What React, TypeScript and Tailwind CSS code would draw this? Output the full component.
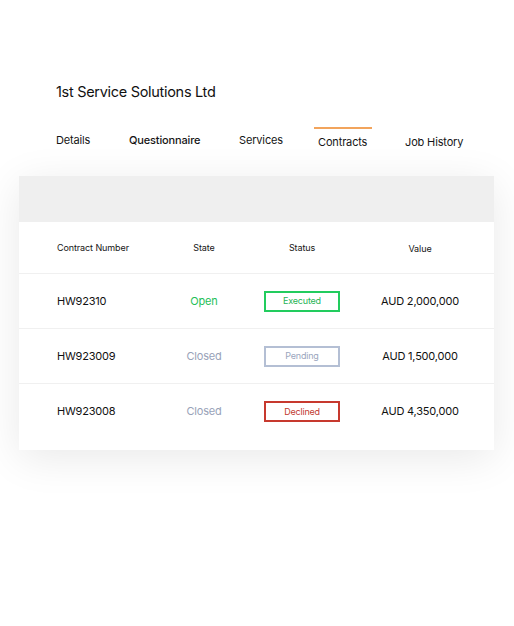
import React from "react";

const font = { fontFamily: "Inter, 'Noto Sans', sans-serif" };

type Row = {
  number: string;
  state: "Open" | "Closed";
  status: "Executed" | "Pending" | "Declined";
  value: string;
};

const rows: Row[] = [
  { number: "HW92310", state: "Open", status: "Executed", value: "AUD 2,000,000" },
  { number: "HW923009", state: "Closed", status: "Pending", value: "AUD 1,500,000" },
  { number: "HW923008", state: "Closed", status: "Declined", value: "AUD 4,350,000" },
];

const cols = "grid grid-cols-[113px_68px_128px_108px] pl-[38px]";

function StatusBadge({ status }: { status: Row["status"] }) {
  const styles = {
    Executed: "border-[#22cc5e] text-[#1fb455]",
    Pending: "border-[#b4bfd4] text-[#9aa5bd]",
    Declined: "border-[#c7392e] text-[#c23a30]",
  }[status];
  return (
    <div
      className={`w-[76px] h-[21px] border-2 flex items-center justify-center text-[9px] ${styles}`}
    >
      {status}
    </div>
  );
}

export default function App() {
  return (
    <div className="w-[514px] h-[626px] bg-white" style={font}>
      <div className="pt-[82px] pl-[56px]">
        <h1 className="text-[14.5px] leading-[20px] text-[#111] tracking-[-0.3px]">
          1st Service Solutions Ltd
        </h1>
      </div>

      <nav className="mt-[25px] pl-[56px] flex items-start text-[11px] tracking-[-0.15px] text-[#151515] h-[49px]">
        <div className="w-[73px] mt-[5px]">Details</div>
        <div className="w-[110px] mt-[5px] font-medium">Questionnaire</div>
        <div className="w-[75px] mt-[5px]">Services</div>
        <div className="w-[91px] flex flex-col">
          <div className="h-[2px] w-[58px] bg-[#f2a45c]" />
          <div className="mt-[5px] ml-[4px]">Contracts</div>
        </div>
        <div className="mt-[7px]">Job History</div>
      </nav>

      <div className="ml-[19px] w-[475px] bg-white shadow-[0_8px_40px_rgba(0,0,0,0.09)]">
        <div className="h-[46px] bg-[#efefef]" />

        <div
          className={`${cols} h-[52px] items-center text-[9px] tracking-[-0.1px] text-[#151515] border-b border-[#f0f0f0]`}
        >
          <div>Contract Number</div>
          <div className="text-center">State</div>
          <div className="text-center">Status</div>
          <div className="text-center pt-[3px]">Value</div>
        </div>

        {rows.map((r, i) => (
          <div
            key={r.number}
            className={`${cols} h-[55px] items-center text-[11px] tracking-[-0.2px] text-[#111] ${
              i < rows.length - 1 ? "border-b border-[#f0f0f0]" : ""
            }`}
          >
            <div>{r.number}</div>
            <div
              className={`text-center ${
                r.state === "Open" ? "text-[#1fc058]" : "text-[#98a2b8]"
              }`}
            >
              {r.state}
            </div>
            <div className="flex justify-center">
              <StatusBadge status={r.status} />
            </div>
            <div className="text-center">{r.value}</div>
          </div>
        ))}
        <div className="h-[11px]" />
      </div>
    </div>
  );
}
